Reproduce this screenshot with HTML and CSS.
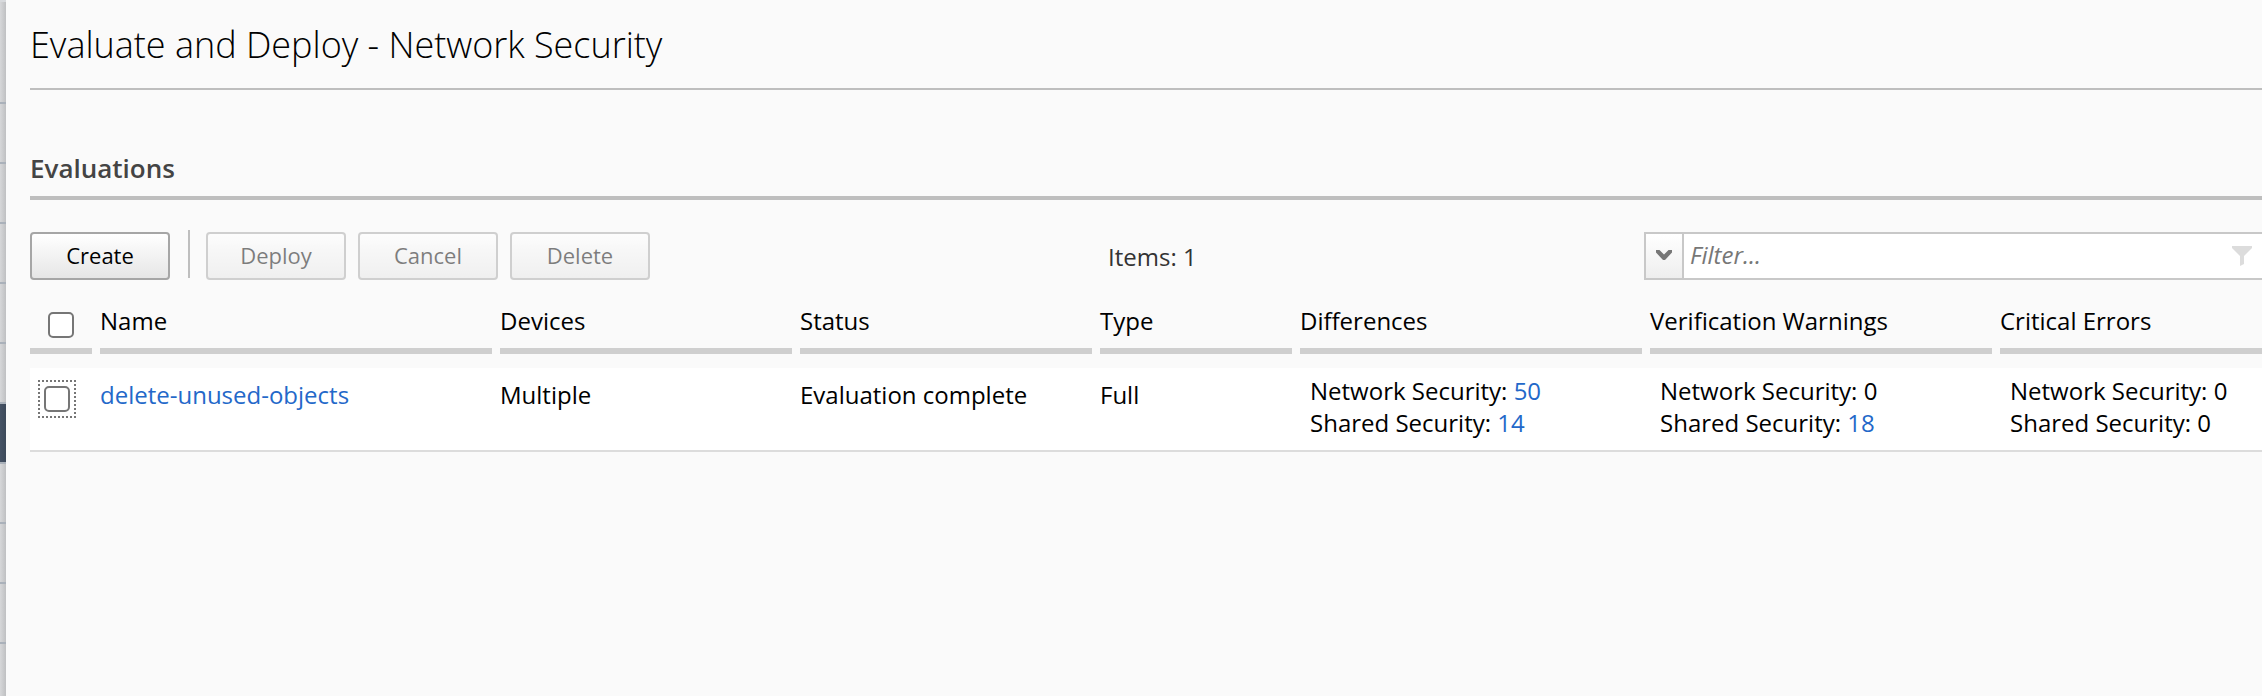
FILE: index.html
```html
<!DOCTYPE html>
<html lang="en">
<head>
<meta charset="utf-8">
<title>Evaluate and Deploy - Network Security</title>
<link rel="stylesheet" href="styles.css">
</head>
<body>
<div class="app">
  <nav class="rail">
    <span class="rail-item rail-first"></span>
    <span class="rail-item"></span>
    <span class="rail-item"></span>
    <span class="rail-item"></span>
    <span class="rail-item"></span>
    <span class="rail-item"></span>
    <span class="rail-item active"></span>
    <span class="rail-item"></span>
    <span class="rail-item"></span>
    <span class="rail-item"></span>
    <span class="rail-item rail-last"></span>
  </nav>
  <main class="panel">
    <h1 class="page-title">Evaluate and Deploy - Network Security</h1>
    <h2 class="section-title">Evaluations</h2>
    <div class="toolbar">
      <button class="btn">Create</button>
      <span class="divider"></span>
      <button class="btn" disabled>Deploy</button>
      <button class="btn" disabled>Cancel</button>
      <button class="btn" disabled>Delete</button>
      <span class="count">Items: 1</span>
      <div class="filter">
        <span class="filter-toggle"><svg width="16" height="10" viewBox="0 0 16 10"><path d="M0 0H3.5L8 4.5L12.500 0H16V2.500L9.500 9.500Q8 10.500 6.500 9.500L0 2.500Z" fill="#777"/></svg></span>
        <span class="filter-text">Filter...</span>
        <svg class="funnel" width="20" height="20" viewBox="0 0 20 20"><path d="M0 0H20V2L12 10V18L8 20V10L0 2Z" fill="#dcdcdc"/></svg>
      </div>
    </div>
    <div class="grid head">
      <div class="th th-check"><span class="check"></span></div>
      <div class="th">Name</div>
      <div class="th">Devices</div>
      <div class="th">Status</div>
      <div class="th">Type</div>
      <div class="th">Differences</div>
      <div class="th">Verification Warnings</div>
      <div class="th">Critical Errors</div>
    </div>
    <div class="grid row">
      <div class="td-check"><span class="focus"><span class="check"></span></span></div>
      <div class="td"><a class="link">delete-unused-objects</a></div>
      <div class="td">Multiple</div>
      <div class="td">Evaluation complete</div>
      <div class="td">Full</div>
      <div class="td-lines"><div>Network Security: <a class="link">50</a></div><div>Shared Security: <a class="link">14</a></div></div>
      <div class="td-lines"><div>Network Security: 0</div><div>Shared Security: <a class="link">18</a></div></div>
      <div class="td-lines"><div>Network Security: 0</div><div>Shared Security: 0</div></div>
    </div>
  </main>
</div>
</body>
</html>
```
FILE: styles.css
```css
* { box-sizing: border-box; }
body {
  margin: 0;
  background: #fafafa;
  color: #000;
  font-family: "Open Sans", "Noto Sans", sans-serif;
  font-size: 24px;
  line-height: 32px;
}
.app { display: flex; height: 696px; overflow: hidden; }
.rail {
  flex: 0 0 6px;
  display: flex;
  flex-direction: column;
  background: linear-gradient(to right, #d6d7d9, #bfc0c2);
}
.rail-item { flex: 0 0 60px; border-bottom: 2px solid #aab1ba; }
.rail-first { flex-basis: 104px; border-top: 2px solid #d8dadd; }
.rail-item.active { background: linear-gradient(to right, #465365, #3c495a); background-clip: padding-box; }
.rail-last { border-bottom: 0; }
.panel { flex: 1; min-width: 0; padding-left: 24px; }
.page-title {
  margin: 0;
  padding-top: 21px;
  height: 90px;
  border-bottom: 2px solid #bebebe;
  font-size: 36px;
  font-weight: 300;
  line-height: 48px;
  letter-spacing: -0.02px;
}
.section-title {
  margin: 0;
  padding-top: 60px;
  height: 110px;
  border-bottom: 4px solid #bebebe;
  font-size: 26px;
  font-weight: 600;
  line-height: 36px;
  color: #444;
}
.toolbar { display: flex; padding-top: 32px; height: 96px; }
.btn {
  width: 140px;
  height: 48px;
  margin: 0 12px 0 0;
  padding: 0 0 2px;
  border: 2px solid #a6a6a6;
  border-radius: 4px;
  background: linear-gradient(#fff, #e6e6e6);
  font: 22px/30px "Open Sans", "Noto Sans", sans-serif;
  color: #000;
}
.btn:disabled { opacity: 0.5; }
.divider { width: 2px; height: 48px; margin: -2px 16px 0 6px; background: #bebebe; }
.count { width: 536px; padding: 9px 0 0 446px; margin-right: 446px; color: #333; white-space: nowrap; }
.filter {
  display: flex;
  align-items: center;
  flex: 1;
  height: 48px;
  border: 2px solid #c8c8c8;
  border-right: 0;
  background: #fff;
}
.filter-toggle {
  display: flex;
  align-items: center;
  justify-content: center;
  width: 38px;
  height: 44px;
  padding-bottom: 2px;
  border-right: 2px solid #c8c8c8;
  background: linear-gradient(#fff, #eee);
}
.filter-text { flex: 1; padding: 0 0 2px 6px; font-style: italic; color: #777; }
.funnel { margin-right: 10px; }
.grid {
  display: grid;
  grid-template-columns: 62px 392px 292px 292px 192px 342px 342px 342px;
  column-gap: 8px;
  width: 2320px;
}
.head { height: 72px; }
.th { height: 58px; padding-top: 9px; border-bottom: 6px solid #cfcfcf; white-space: nowrap; }
.th-check { padding: 16px 0 0 18px; }
.check {
  display: block;
  width: 26px;
  height: 26px;
  border: 2px solid #767676;
  border-radius: 5px;
  background: #fff;
}
.row { height: 84px; border-bottom: 2px solid #dcdcdc; background: #fff; }
.td { padding-top: 11px; white-space: nowrap; }
.td-check { padding: 12px 0 0 8px; }
.focus { display: block; width: 38px; height: 38px; padding: 4px; border: 2px dotted #767676; }
.td-lines { padding: 7px 0 0 10px; white-space: nowrap; }
.link { color: #2368c9; text-decoration: none; }
```
